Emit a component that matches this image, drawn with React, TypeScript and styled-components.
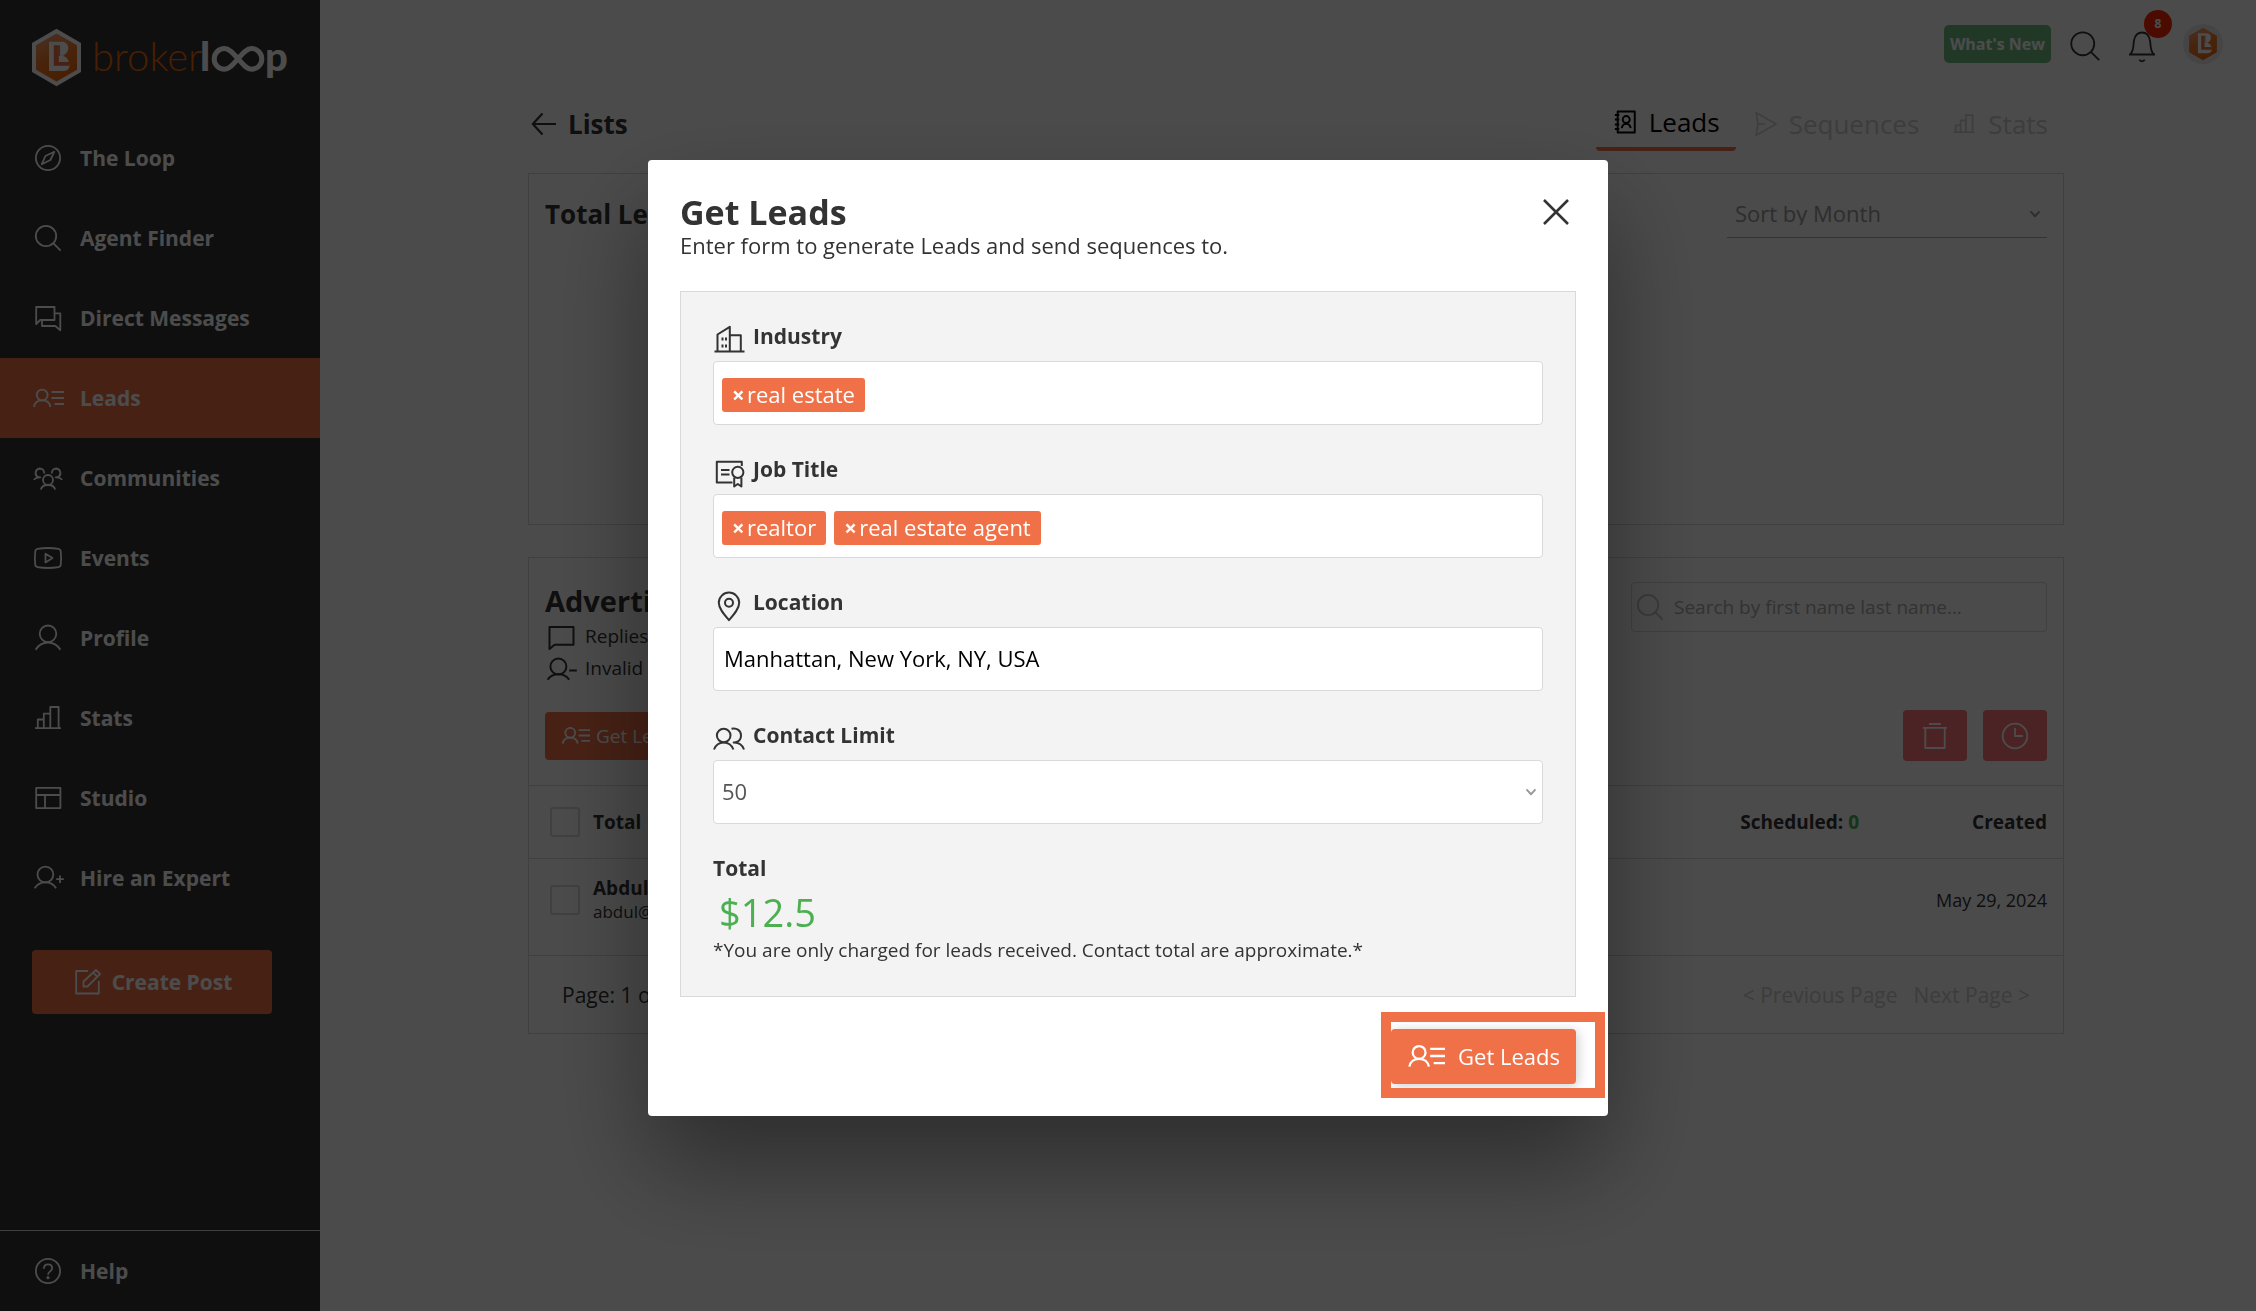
import React from "react";
import styled, { createGlobalStyle, css } from "styled-components";

const color = {
  ink: "#333333",
  orange: "#f07147",
  green: "#4caf50",
  mint: "#74bd84",
  red: "#fa7678",
  line: "#d6d6d6",
  faint: "#cccccc",
  muted: "#999999",
  panel: "#f3f3f3",
};

const GlobalStyle = createGlobalStyle`
  *, *::before, *::after { box-sizing: border-box; }
  body {
    margin: 0;
    background: #fafafa;
    color: ${color.ink};
    font-family: "Open Sans", "Noto Sans", sans-serif;
    font-size: 21px;
    line-height: 24px;
  }
  button, input, select { font: inherit; color: inherit; }
  button { border: 0; padding: 0; background: none; cursor: pointer; }
  h1, h2, p { margin: 0; }
  a { color: inherit; text-decoration: none; }
`;

/* ---------- icons ---------- */

const Svg = styled.svg<{ $size?: number; $weight?: number }>`
  display: block;
  flex: none;
  width: ${(p) => p.$size ?? 32}px;
  height: ${(p) => p.$size ?? 32}px;
  fill: none;
  stroke: currentColor;
  stroke-width: ${(p) => p.$weight ?? 1.8};
  stroke-linejoin: round;
`;

type IconName =
  | "compass" | "search" | "messages" | "leads" | "communities" | "events"
  | "profile" | "stats" | "studio" | "hire" | "edit" | "help" | "back" | "close"
  | "bell" | "contacts" | "send" | "reply" | "invalid" | "trash" | "clock"
  | "building" | "certificate" | "pin" | "people" | "chevron";

const shapes: Record<IconName, React.ReactNode> = {
  compass: (
    <>
      <circle cx="16" cy="16" r="12.1" />
      <path d="M22.3 9.8 13.4 14 9.7 22.3 18.4 18z" />
    </>
  ),
  search: (
    <>
      <circle cx="14" cy="14" r="10.2" />
      <path d="m21.2 21.2 7.4 7.4" />
    </>
  ),
  messages: (
    <>
      <path d="M4.2 22V5h18.3v13H8.2z" />
      <path d="M22.5 11.3h5.8v17l-5-4.3H10v-6" />
    </>
  ),
  leads: (
    <>
      <circle cx="10.2" cy="13" r="5.4" />
      <path d="M2 25c.6-4.2 4-6.6 8.2-6.6s7.6 2.4 8.2 6.6M19.5 10H32M19.5 16H32M22.5 22H32" />
    </>
  ),
  communities: (
    <>
      <circle cx="16" cy="18" r="5" />
      <path d="M8.8 27.5c.8-3.2 3.6-4.5 7.2-4.500s6.400 1.300 7.200 4.500" />
      <path d="M12.200 11.500c.2-3-1.700-5-4.500-5a4.600 4.600 0 0 0-2.200 8.300l2.800.5c-3.300.1-5.500.8-6.300 2.700" />
      <path d="M19.800 11.500c-.2-3 1.700-5 4.500-5a4.600 4.600 0 0 1 2.200 8.300l-2.800.5c3.300.1 5.500.8 6.300 2.700" />
    </>
  ),
  events: (
    <>
      <path d="M5.5 6.8c7-1.100 14-1.100 21 0 1.500.2 2 .9 2.200 2.200.6 4.700.6 9.300 0 14-.2 1.300-.7 2-2.200 2.200-7 1.100-14 1.100-21 0-1.500-.2-2-.9-2.200-2.200-.6-4.700-.6-9.300 0-14 .2-1.300.7-2 2.200-2.200z" />
      <path d="M13.500 11.800v8.600l7-4.300z" />
    </>
  ),
  profile: (
    <>
      <circle cx="16" cy="11.8" r="8.3" />
      <path d="M3.6 27.8C6.3 23.3 10.6 20.500 16 20.500s9.700 2.800 12.400 7.300" />
    </>
  ),
  stats: <path d="M3 26.2h26M5.800 26V17.500h6M11.800 26V11.600h6.500M18.300 26V5h8.300v21" />,
  studio: <path d="M4.200 5.900h24.200v20.200H4.200zM4.200 13h24.200M13 13v13" />,
  hire: (
    <>
      <circle cx="13.4" cy="12.5" r="7.9" />
      <path d="M2.700 26.300c2.200-3.800 6-6 10.700-6s8.500 2.200 10.700 6M24.200 17.200h7.600M28 13.400V21" />
    </>
  ),
  edit: (
    <>
      <path d="M16 5H4.200v22.500h22.600V15" />
      <path d="M11.500 20.500v-5L24 4l4 4-12.500 12.500zM21.200 6.600l4 4" />
    </>
  ),
  help: (
    <>
      <circle cx="16" cy="16" r="12.1" />
      <path d="M11.800 13.800c0-2.800 1.700-4.400 4.200-4.400s4.200 1.600 4.200 3.900c0 3-4.200 3.200-4.200 6.400" />
      <circle cx="16" cy="22.7" r=".7" />
    </>
  ),
  back: <path d="M28 16H4.800M14.500 5.500 4.800 16l9.700 10.500" />,
  close: <path d="m4 4 24 24M28 4 4 28" />,
  bell: (
    <>
      <path d="M3 26.500h26M4.300 26.300C8.200 22 7 17.500 8 12.500 9 7.200 11.800 4.500 16 4.500s7 2.700 8 8c1 5 -.2 9.500 3.700 13.800" />
      <path d="M13.300 31.600c1.200 2.200 4.200 2.200 5.400 0" />
    </>
  ),
  contacts: (
    <>
      <path d="M7 3h21v26H7zM3.500 7.500H9M3.500 13H9M3.500 19H9M3.500 24.500H9" />
      <circle cx="17.5" cy="13" r="4.3" />
      <path d="M12 23.500c.6-3.500 2.500-5.200 5.500-5.200s4.900 1.700 5.500 5.200" />
    </>
  ),
  send: <path d="M5 2 29.500 16 5 30 7.500 16zM7.500 16h8.500" />,
  reply: <path d="M4.500 29V7h24v17.800H9.500z" />,
  invalid: (
    <>
      <circle cx="13.4" cy="14.5" r="8" />
      <path d="M2.700 27.800c2.200-3.500 6-5.500 10.700-5.500s8.500 2 10.700 5.500M24.200 18.600h7.600" />
    </>
  ),
  trash: <path d="M4 7.800h24M10 4h12M6.300 8v20h19.400V8" />,
  clock: (
    <>
      <circle cx="16" cy="16" r="12.3" />
      <path d="M16 8v8h7.800" />
    </>
  ),
  building: (
    <>
      <path d="M1.500 27.500h30M4.500 27.300V10.500L16.800 2.800v24.500M16.800 11.300h11v16" />
      <path d="M9.500 13.500v3M13 13.500v3M9.500 20.500v3M13 20.500v3" />
    </>
  ),
  certificate: (
    <>
      <path d="M19.500 25.500H3.800V4.800h25V9M8 13h8.500M8 17.500h8.500" />
      <circle cx="24.8" cy="15.3" r="5.6" />
      <path d="M21.200 20.500v9l3.600-2.500 3.600 2.500v-9" />
    </>
  ),
  pin: (
    <>
      <path d="M16 30.200C10.500 24 5.800 18.500 5.800 12.800a10.200 10.200 0 0 1 20.400 0C26.200 18.500 21.500 24 16 30.200z" />
      <circle cx="16" cy="12.8" r="4" />
    </>
  ),
  people: (
    <>
      <circle cx="10.7" cy="12.5" r="6.8" />
      <path d="M1 26.500c1.700-4.300 5.300-7 9.700-7s8 2.700 9.700 7M18.500 5.800c5.500-1.200 9.500 2 9.500 6.600 0 3.200-1.600 5.500-4.300 6.600-.9.400-2.200.5-3 .6 5.300-.2 8.600 2.500 10.300 6.900" />
    </>
  ),
  chevron: <path d="m4 9 12 13L28 9" />,
};

const Icon = ({ name, size, weight }: { name: IconName; size?: number; weight?: number }) => (
  <Svg viewBox="0 0 32 32" overflow="visible" $size={size} $weight={weight} aria-hidden="true">
    {shapes[name]}
  </Svg>
);

const BrandMark = ({ id }: { id: string }) => (
  <>
    <defs>
      <linearGradient id={id} x1="0" y1="0" x2="0.4" y2="1">
        <stop offset="0" stopColor="#f3a77c" />
        <stop offset="0.55" stopColor="#f07a2c" />
        <stop offset="1" stopColor="#f0690a" />
      </linearGradient>
    </defs>
    <path d="M24.500 5.500 45 17.300v24.400L24.500 53.500 4 41.700V17.300z" fill={`url(#${id})`} />
    <path
      d="M17 13.800h12.500c4.500 0 6.700 2.600 6.700 6.200 0 2.700-1 4.500-2.600 5.700L31 28c3 .8 5.600 3 6 6.500l.5 4.200c-.8 2.800-3.200 4.300-6.500 4.300H17z"
      fill="#fff"
    />
    <path d="M21.800 17.200h5V34h10.800v3.800H21.800z" fill="#f07040" />
    <path d="M26.800 17.200h1.300V28h-1.300z" fill="#f07a2c" />
  </>
);

const LogoSvg = styled.svg`
  display: block;
  width: 256px;
  height: 64px;
`;

const Logo = () => (
  <LogoSvg viewBox="0 0 256 64" overflow="visible" role="img" aria-label="brokerloop">
    <path d="M24.500.8 49 15v29L24.500 58.200 0 44V15z" fill="#fff" />
    <BrandMark id="logo-mark" />
    <g fontFamily="Lato, sans-serif" fontSize="40">
      <text x="60" y="43" fontWeight="300" fill="#f0690a">broker</text>
      <text x="168" y="43" fontWeight="900" fill="#fff">l</text>
      <text x="233" y="43" fontWeight="900" fill="#fff">p</text>
    </g>
    <path
      d="M206 30.700c-5 6-8.500 10.500-13.500 10.500a10.300 10.300 0 0 1 0-20.600c5 0 8.500 4.500 13.500 10.100s8.500 10.500 13.500 10.500a10.300 10.300 0 0 0 0-20.600c-5 0-8.500 4.500-13.500 10.100z"
      fill="none"
      stroke="#fff"
      strokeWidth="5"
    />
  </LogoSvg>
);

/* ---------- shell ---------- */

const Page = styled.div`
  display: flex;
  min-height: 100vh;
`;

const Sidebar = styled.aside`
  display: flex;
  flex-direction: column;
  flex: 0 0 320px;
  background: ${color.ink};
  color: #fff;
`;

const Brand = styled.a`
  height: 118px;
  padding: 28px 32px 0;
`;

const NavLink = styled.a<{ $active?: boolean }>`
  display: flex;
  align-items: center;
  gap: 16px;
  height: 80px;
  padding: 0 32px;
  font-weight: 700;
  background: ${(p) => (p.$active ? color.orange : "transparent")};
`;

const CreatePost = styled.button`
  display: flex;
  align-items: center;
  justify-content: center;
  gap: 8px;
  height: 64px;
  margin: 32px 48px 0 32px;
  border-radius: 4px;
  background: ${color.orange};
  color: #fff;
  font-weight: 700;
`;

const SidebarFooter = styled.div`
  margin-top: auto;
  border-top: 1px solid ${color.line};
`;

const Main = styled.main`
  flex: 1;
  min-width: 0;
`;

const TopBar = styled.header`
  display: flex;
  align-items: center;
  justify-content: flex-end;
  gap: 16px;
  height: 88px;
  padding: 0 33px;
`;

const WhatsNew = styled.button`
  height: 38px;
  padding: 0 6px;
  border-radius: 5px;
  background: ${color.mint};
  color: #fff;
  font-size: 16px;
  font-weight: 700;
`;

const IconButton = styled.button`
  position: relative;
  display: grid;
  place-items: center;
  width: 32px;
  height: 32px;
`;

const BellButton = styled(IconButton)`
  width: 40px;
  margin: 0 5px 0 7px;
`;

const Badge = styled.span`
  position: absolute;
  top: -18px;
  right: -10px;
  width: 28px;
  height: 28px;
  border-radius: 50%;
  background: #ff2600;
  color: #fff;
  font-size: 12px;
  font-weight: 700;
  line-height: 28px;
  text-align: center;
`;

const Avatar = styled.button`
  display: grid;
  place-items: center;
  width: 40px;
  height: 40px;
  border-radius: 50%;
  background: #e6e6e6;

  svg { width: 34px; height: 40px; }
`;

const Content = styled.div`
  max-width: 1568px;
  margin: 0 auto;
  padding: 0 8px 32px 24px;
`;

const PageHead = styled.div`
  display: flex;
  align-items: flex-start;
  justify-content: space-between;
  margin: 8px 0 22px;
`;

const BackLink = styled.a`
  display: flex;
  align-items: center;
  gap: 8px;
  height: 55px;
`;

const SectionTitle = styled.h1`
  font-size: 26px;
  line-height: 40px;
`;

const Tabs = styled.nav`
  display: flex;
`;

const Tab = styled.a<{ $active?: boolean }>`
  display: flex;
  align-items: center;
  gap: 11px;
  height: 55px;
  padding: 0 16px;
  font-size: 26px;
  color: ${color.faint};
  ${(p) =>
    p.$active &&
    css`
      color: #000;
      border-bottom: 4px solid ${color.orange};
      border-radius: 4px;
    `}
`;

const Card = styled.section`
  border: 1px solid ${color.line};
  margin-bottom: 32px;
`;

const ChartCard = styled(Card)`
  min-height: 352px;
  padding: 16px;
`;

const SpreadRow = styled.div<{ $top?: boolean }>`
  display: flex;
  justify-content: space-between;
  align-items: ${(p) => (p.$top ? "flex-start" : "center")};
`;

const SelectWrap = styled.span`
  position: relative;
  display: block;

  svg {
    position: absolute;
    top: 50%;
    right: 6px;
    transform: translateY(-50%);
    color: ${color.muted};
    pointer-events: none;
  }
`;

const SortSelect = styled.select`
  display: block;
  width: 320px;
  height: 48px;
  padding: 0 8px 2px;
  border: 0;
  border-bottom: 1px solid #aaaaaa;
  background: transparent;
  appearance: none;
  color: ${color.muted};
  font-size: 22px;
`;

const ListHead = styled.div`
  padding: 24px 16px;
`;

const ListTitle = styled.h2`
  font-size: 29px;
  line-height: 38px;
`;

const Fact = styled.p`
  display: flex;
  align-items: center;
  gap: 8px;
  height: 32px;
  font-size: 19px;
`;

const SearchBox = styled.label`
  display: flex;
  align-items: center;
  gap: 8px;
  width: 416px;
  height: 50px;
  padding: 0 2px;
  border: 1px solid ${color.line};
  border-radius: 4px;
  color: #c0c0c0;
`;

const SearchInput = styled.input`
  flex: 1;
  min-width: 0;
  border: 0;
  padding: 0;
  outline: 0;
  background: transparent;
  font-size: 19px;

  &::placeholder { color: #aaaaaa; opacity: 1; }
`;

const Actions = styled(SpreadRow)`
  height: 51px;
  margin-top: 26px;
`;

const ListButton = styled.button`
  display: flex;
  align-items: center;
  gap: 6px;
  height: 48px;
  padding: 0 16px;
  border-radius: 4px;
  background: ${color.orange};
  color: #fff;
  font-size: 19px;
`;

const ButtonGroup = styled.div`
  display: flex;
  gap: 16px;
`;

const DangerButton = styled.button`
  display: grid;
  place-items: center;
  width: 64px;
  height: 51px;
  border-radius: 4px;
  background: ${color.red};
  color: #fff;
`;

const Table = styled.table`
  width: 100%;
  border-collapse: collapse;
  font-size: 19px;

  th, td {
    padding: 0 16px 0 0;
    border-top: 1px solid ${color.line};
    border-bottom: 1px solid ${color.line};
    text-align: right;
  }
  th:first-child, td:first-child {
    padding-left: 21px;
    text-align: left;
  }
  th { height: 73px; }
  td { height: 97px; padding-bottom: 14px; }
  th:last-child { width: 188px; }
`;

const CheckRow = styled.label`
  display: flex;
  align-items: center;
  gap: 13px;
`;

const Checkbox = styled.input`
  appearance: none;
  width: 30px;
  height: 30px;
  margin: 0;
  border: 2px solid ${color.line};
  border-radius: 3px;
`;

const Person = styled.span`
  display: grid;
  font-weight: 700;
`;

const Small = styled.span`
  font-size: 17px;
  font-weight: 400;
`;

const DateText = styled.time`
  font-size: 18px;
`;

const Green = styled.span`
  color: ${color.green};
`;

const Pager = styled(SpreadRow)`
  height: 77px;
  padding: 0 33px;
`;

const PagerLinks = styled.div`
  display: flex;
  gap: 16px;

  button { color: ${color.faint}; }
`;

/* ---------- dialog ---------- */

const Backdrop = styled.div`
  position: fixed;
  inset: 0;
  display: flex;
  justify-content: center;
  align-items: flex-start;
  padding: 160px 32px 32px;
  background: rgba(0, 0, 0, 0.7);
  overflow: auto;
`;

const Dialog = styled.div`
  width: 100%;
  max-width: 960px;
  padding: 32px;
  border-radius: 4px;
  background: #fff;
  box-shadow: 0 50px 100px rgba(0, 0, 0, 0.4);
`;

const DialogTitle = styled.h2`
  font-size: 34px;
  line-height: 40px;
`;

const DialogText = styled.p`
  font-size: 22px;
  line-height: 26px;
`;

const CloseButton = styled.button`
  display: grid;
  place-items: center;
  width: 40px;
  height: 40px;
`;

const Form = styled.div`
  display: grid;
  gap: 32px;
  margin: 33px 0 32px;
  padding: 32px;
  border: 1px solid #d9d9d9;
  background: ${color.panel};
`;

const FieldLabel = styled.label`
  display: flex;
  gap: 8px;
  height: 32px;
  margin-bottom: 5px;
  font-weight: 700;
`;

const control = css`
  display: block;
  width: 100%;
  height: 64px;
  border: 1px solid #d9d9d9;
  border-radius: 4px;
  background: #fff;
  font-size: 22px;
`;

const TagBox = styled.div`
  ${control}
  display: flex;
  align-items: center;
  gap: 8px;
  padding: 4px 8px 0;
`;

const Tag = styled.span`
  display: flex;
  align-items: center;
  gap: 3px;
  height: 34px;
  padding: 0 10px 2px;
  border-radius: 3px;
  background: ${color.orange};
  color: #fff;

  button { width: 12px; font-weight: 700; }
`;

const TagInput = styled.input`
  flex: 1;
  min-width: 0;
  border: 0;
  outline: 0;
`;

const TextInput = styled.input`
  ${control}
  padding: 0 10px 2px;
  color: #000;
`;

const FormSelect = styled.select`
  ${control}
  padding: 0 8px 2px;
  appearance: none;
  color: #555555;
`;

const TotalLabel = styled.p`
  margin-bottom: 8px;
  font-weight: 700;
`;

const Price = styled.p`
  padding-left: 6px;
  color: ${color.green};
  font-size: 38px;
  line-height: 48px;
`;

const Note = styled.p`
  font-size: 19px;
  line-height: 28px;
`;

const DialogFooter = styled.div`
  display: flex;
  justify-content: flex-end;
`;

const SubmitWrap = styled.div`
  position: relative;
`;

const Submit = styled.button`
  display: flex;
  align-items: center;
  gap: 13px;
  height: 55px;
  padding: 0 16px 2px;
  border-radius: 4px;
  background: ${color.orange};
  color: #fff;
  font-size: 22px;
  box-shadow: 2px 2px 12px rgba(0, 0, 0, 0.2);
`;

const Highlight = styled.span`
  position: absolute;
  inset: -17px -29px -14px -10px;
  border: 10px solid ${color.orange};
  pointer-events: none;
`;

const nav: { icon: IconName; label: string; active?: boolean }[] = [
  { icon: "compass", label: "The Loop" },
  { icon: "search", label: "Agent Finder" },
  { icon: "messages", label: "Direct Messages" },
  { icon: "leads", label: "Leads", active: true },
  { icon: "communities", label: "Communities" },
  { icon: "events", label: "Events" },
  { icon: "profile", label: "Profile" },
  { icon: "stats", label: "Stats" },
  { icon: "studio", label: "Studio" },
  { icon: "hire", label: "Hire an Expert" },
];

const TagField = ({ id, icon, label, tags }: { id: string; icon: IconName; label: string; tags: string[] }) => (
  <div>
    <FieldLabel htmlFor={id}>
      <Icon name={icon} weight={2} />
      {label}
    </FieldLabel>
    <TagBox>
      {tags.map((tag) => (
        <Tag key={tag}>
          <button type="button" aria-label={`Remove ${tag}`}>×</button>
          {tag}
        </Tag>
      ))}
      <TagInput id={id} type="text" />
    </TagBox>
  </div>
);

const GetLeadsDialog = () => (
  <Backdrop>
    <Dialog role="dialog" aria-modal="true" aria-labelledby="dialog-title">
      <SpreadRow $top>
        <div>
          <DialogTitle id="dialog-title">Get Leads</DialogTitle>
          <DialogText>Enter form to generate Leads and send sequences to.</DialogText>
        </div>
        <CloseButton type="button" aria-label="Close">
          <Icon name="close" weight={2.6} />
        </CloseButton>
      </SpreadRow>
      <Form>
        <TagField id="industry" icon="building" label="Industry" tags={["real estate"]} />
        <TagField id="job-title" icon="certificate" label="Job Title" tags={["realtor", "real estate agent"]} />
        <div>
          <FieldLabel htmlFor="location">
            <Icon name="pin" weight={2} />
            Location
          </FieldLabel>
          <TextInput id="location" type="text" defaultValue="Manhattan, New York, NY, USA" />
        </div>
        <div>
          <FieldLabel htmlFor="limit">
            <Icon name="people" weight={2} />
            Contact Limit
          </FieldLabel>
          <SelectWrap>
            <FormSelect id="limit" defaultValue="50">
              <option>50</option>
            </FormSelect>
            <Icon name="chevron" size={12} weight={5} />
          </SelectWrap>
        </div>
        <div>
          <TotalLabel>Total</TotalLabel>
          <Price>$12.5</Price>
          <Note>*You are only charged for leads received. Contact total are approximate.*</Note>
        </div>
      </Form>
      <DialogFooter>
        <SubmitWrap>
          <Submit type="button">
            <Icon name="leads" size={38} weight={1.9} />
            Get Leads
          </Submit>
          <Highlight />
        </SubmitWrap>
      </DialogFooter>
    </Dialog>
  </Backdrop>
);

export default function App() {
  return (
    <>
      <GlobalStyle />
      <Page>
        <Sidebar>
          <Brand href="#">
            <Logo />
          </Brand>
          <nav>
            {nav.map((item) => (
              <NavLink key={item.label} href="#" $active={item.active}>
                <Icon name={item.icon} />
                {item.label}
              </NavLink>
            ))}
          </nav>
          <CreatePost type="button">
            <Icon name="edit" />
            Create Post
          </CreatePost>
          <SidebarFooter>
            <NavLink href="#">
              <Icon name="help" />
              Help
            </NavLink>
          </SidebarFooter>
        </Sidebar>

        <Main>
          <TopBar>
            <WhatsNew type="button">What's New</WhatsNew>
            <IconButton type="button" aria-label="Search">
              <Icon name="search" size={36} weight={1.6} />
            </IconButton>
            <BellButton type="button" aria-label="Notifications">
              <Icon name="bell" />
              <Badge>8</Badge>
            </BellButton>
            <Avatar type="button" aria-label="Account">
              <svg viewBox="0 0 49 59" aria-hidden="true">
                <BrandMark id="avatar-mark" />
              </svg>
            </Avatar>
          </TopBar>

          <Content>
            <PageHead>
              <BackLink href="#">
                <Icon name="back" weight={2.2} />
                <SectionTitle>Lists</SectionTitle>
              </BackLink>
              <Tabs>
                <Tab href="#" $active>
                  <Icon name="contacts" size={26} weight={2.4} />
                  Leads
                </Tab>
                <Tab href="#">
                  <Icon name="send" size={26} weight={1.8} />
                  Sequences
                </Tab>
                <Tab href="#">
                  <Icon name="stats" size={26} weight={2} />
                  Stats
                </Tab>
              </Tabs>
            </PageHead>

            <ChartCard>
              <SpreadRow>
                <SectionTitle as="h2">Total Leads</SectionTitle>
                <SelectWrap>
                  <SortSelect aria-label="Sort">
                    <option>Sort by Month</option>
                  </SortSelect>
                  <Icon name="chevron" size={12} weight={5} />
                </SelectWrap>
              </SpreadRow>
            </ChartCard>

            <Card>
              <ListHead>
                <SpreadRow $top>
                  <div>
                    <ListTitle>Advertising</ListTitle>
                    <Fact>
                      <Icon name="reply" weight={2} />
                      Replies
                    </Fact>
                    <Fact>
                      <Icon name="invalid" weight={2} />
                      Invalid
                    </Fact>
                  </div>
                  <SearchBox>
                    <Icon name="search" />
                    <SearchInput type="search" placeholder="Search by first name last name..." />
                  </SearchBox>
                </SpreadRow>
                <Actions>
                  <ListButton type="button">
                    <Icon name="leads" size={29} weight={2} />
                    Get Leads
                  </ListButton>
                  <ButtonGroup>
                    <DangerButton type="button" aria-label="Delete">
                      <Icon name="trash" />
                    </DangerButton>
                    <DangerButton type="button" aria-label="Schedule">
                      <Icon name="clock" />
                    </DangerButton>
                  </ButtonGroup>
                </Actions>
              </ListHead>
              <Table>
                <thead>
                  <tr>
                    <th>
                      <CheckRow>
                        <Checkbox type="checkbox" />
                        Total
                      </CheckRow>
                    </th>
                    <th>
                      Scheduled: <Green>0</Green>
                    </th>
                    <th>Created</th>
                  </tr>
                </thead>
                <tbody>
                  <tr>
                    <td>
                      <CheckRow>
                        <Checkbox type="checkbox" />
                        <Person>
                          Abdul
                          <Small>abdul@</Small>
                        </Person>
                      </CheckRow>
                    </td>
                    <td />
                    <td>
                      <DateText dateTime="2024-05-29">May 29, 2024</DateText>
                    </td>
                  </tr>
                </tbody>
              </Table>
              <Pager>
                <span>Page: 1 of 1</span>
                <PagerLinks>
                  <button type="button">&lt; Previous Page</button>
                  <button type="button">Next Page &gt;</button>
                </PagerLinks>
              </Pager>
            </Card>
          </Content>
        </Main>
      </Page>
      <GetLeadsDialog />
    </>
  );
}
